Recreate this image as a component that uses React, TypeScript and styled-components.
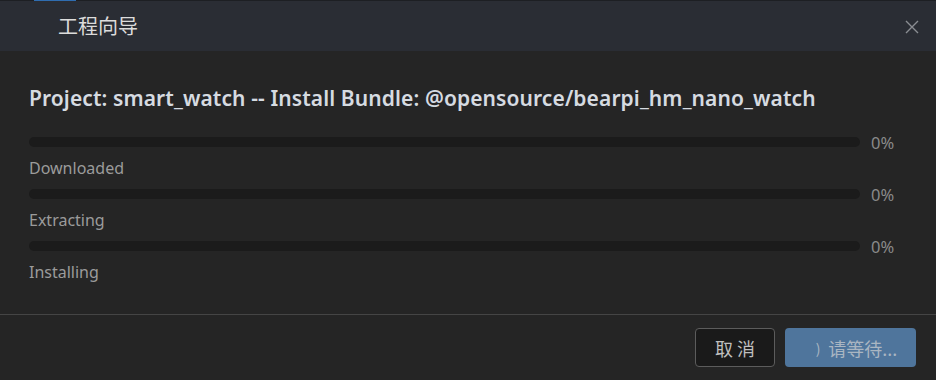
import styled, { createGlobalStyle } from 'styled-components';

const GlobalStyle = createGlobalStyle`
html, body {
  margin: 0;
  padding: 0;
  background: #252525;
}
body {
  font-family: "Noto Sans", "Noto Sans CJK SC", sans-serif;
}
`;

const steps = ['Downloaded', 'Extracting', 'Installing'];

function App() {
  return (
    <>
      <GlobalStyle />
      <Dialog>
        <TopStrip>
          <ActiveTab />
        </TopStrip>
        <Header>
          <HeaderTitle>工程向导</HeaderTitle>
          <CloseBtn aria-label="close">
            <svg width="14" height="14" viewBox="0 0 14 14">
              <path d="M1 1L13 13M13 1L1 13" stroke="#8a8d92" strokeWidth="1.4" />
            </svg>
          </CloseBtn>
        </Header>
        <Body>
          <Heading>Project: smart_watch -- Install Bundle: @opensource/bearpi_hm_nano_watch</Heading>
          <Steps>
            {steps.map((s) => (
              <Step key={s}>
                <BarRow>
                  <Track>
                    <Fill style={{ width: '0%' }} />
                  </Track>
                  <Percent>0%</Percent>
                </BarRow>
                <StepLabel>{s}</StepLabel>
              </Step>
            ))}
          </Steps>
        </Body>
        <Footer>
          <CancelBtn>取 消</CancelBtn>
          <WaitBtn>
            <Spinner>)</Spinner>
            请等待...
          </WaitBtn>
        </Footer>
      </Dialog>
    </>
  );
}

const Dialog = styled.div`
width: 936px;
height: 380px;
display: flex;
flex-direction: column;
background: #252525;
overflow: hidden;
`;

const TopStrip = styled.div`
height: 1px;
background: #1d1f23;
padding-left: 34px;
`;

const ActiveTab = styled.div`
width: 42px;
height: 1px;
background: #2f6db0;
`;

const Header = styled.div`
height: 50px;
background: #2a2d34;
display: flex;
align-items: center;
justify-content: space-between;
padding: 0 17px 0 58px;
`;

const HeaderTitle = styled.div`
font-family: "Noto Sans CJK SC", sans-serif;
font-size: 20px;
color: #dcdcdc;
margin-bottom: 2px;
`;

const CloseBtn = styled.div`
width: 14px;
height: 14px;
display: flex;
margin-top: 2px;
`;

const Body = styled.div`
flex: 1;
padding: 32px 0 0 29px;
border-bottom: 1px solid #454545;
`;

const Heading = styled.div`
font-family: "Noto Sans", sans-serif;
font-weight: 600;
font-size: 21px;
letter-spacing: 0.1px;
line-height: 30px;
color: #d6dbe1;
white-space: nowrap;
`;

const Steps = styled.div`
margin-top: 19px;
display: flex;
flex-direction: column;
gap: 3px;
`;

const Step = styled.div`
display: flex;
flex-direction: column;
`;

const BarRow = styled.div`
display: flex;
align-items: center;
height: 20px;
`;

const Track = styled.div`
width: 831px;
height: 10px;
border-radius: 5px;
background: #1b1b1b;
overflow: hidden;
`;

const Fill = styled.div`
height: 100%;
background: #4f759c;
`;

const Percent = styled.span`
margin-left: 11px;
font-size: 16.5px;
color: #8a8a8a;
`;

const StepLabel = styled.div`
margin-top: 3px;
font-size: 16px;
line-height: 26px;
color: #9b9b9b;
`;

const Footer = styled.div`
height: 65px;
display: flex;
justify-content: flex-end;
align-items: flex-start;
gap: 10px;
padding: 13px 20px 0 0;
box-sizing: border-box;
`;

const CancelBtn = styled.button`
width: 80px;
height: 39px;
box-sizing: border-box;
border: 1px solid #5c5c5c;
border-radius: 4px;
background: #1a1a1a;
color: #bfbfbf;
font-family: "Noto Sans CJK SC", sans-serif;
font-size: 18px;
padding: 0;
`;

const WaitBtn = styled.button`
width: 131px;
height: 39px;
box-sizing: border-box;
border: none;
border-radius: 4px;
background: #4f759c;
color: #aab6c2;
font-family: "Noto Sans CJK SC", sans-serif;
font-size: 18px;
display: flex;
align-items: center;
justify-content: center;
padding: 0 0 0 12px;
`;

const Spinner = styled.span`
display: inline-block;
font-size: 14px;
margin-right: 8px;
color: #aab6c2;
`;

export default App;
